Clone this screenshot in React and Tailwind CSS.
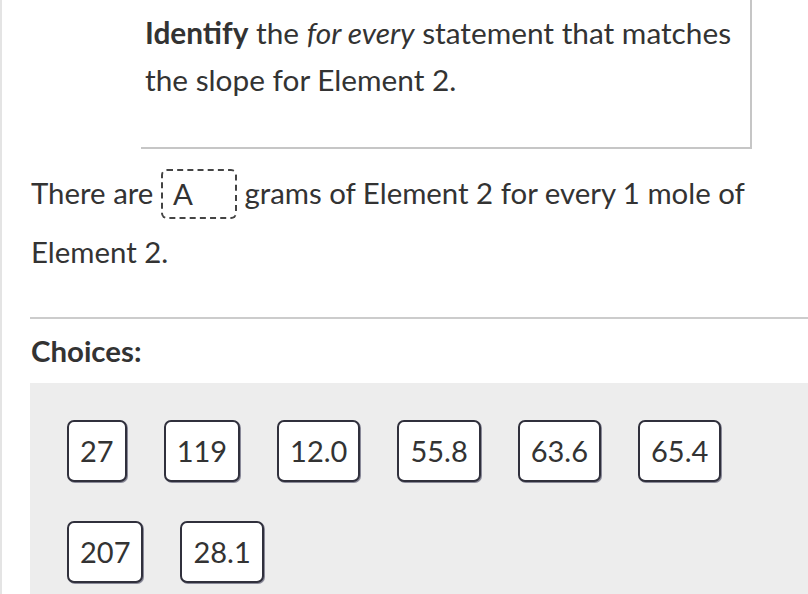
export default function App() {
  const choices = ['27', '119', '12.0', '55.8', '63.6', '65.4', '207', '28.1'];

  return (
    <div
      className="w-[808px] h-[594px] bg-white text-[#333333] overflow-hidden border-l-2 border-[#e4e4e4] flex flex-col"
      style={{ fontFamily: 'Lato, "Open Sans", sans-serif' }}
    >
      {/* Prompt */}
      <div className="shrink-0 ml-[139px] w-[611px] h-[149px] border-r-2 border-b-2 border-[#c6c6c6] pl-[4px] pr-[10px] pt-[9px] text-[29.8px] leading-[47px]">
        <span className="font-bold">Identify</span> the <i>for every</i> statement that matches the slope for Element 2.
      </div>

      {/* Sentence with blank */}
      <div className="shrink-0 pl-[29px] pr-[40px] mt-[14px] text-[29.4px] leading-[59px]">
        There are{' '}
        <span className="inline-flex items-center align-middle w-[76px] h-[50px] border-2 border-dashed border-[#444] rounded-md pl-[10px] -mt-[6px]">
          A
        </span>{' '}
        grams of Element 2 for every 1 mole of Element 2.
      </div>

      {/* Divider */}
      <div className="shrink-0 ml-[28px] mt-[36px] border-t-2 border-[#cccccc]" />

      {/* Choices */}
      <div className="shrink-0 pl-[29px] mt-[15px] text-[29.4px] font-bold leading-[34px]">Choices:</div>

      <div className="ml-[28px] mt-[15px] flex-1 bg-[#ededed] flex flex-wrap content-start gap-x-[37px] gap-y-[39px] p-[37px]">
        {choices.map((c) => (
          <div
            key={c}
            className="h-[62px] px-[11px] flex items-center bg-white border-2 border-[#30303c] rounded-[7px] text-[29px] shadow-[1px_1px_0_#8a8a99]"
          >
            {c}
          </div>
        ))}
      </div>
    </div>
  );
}
